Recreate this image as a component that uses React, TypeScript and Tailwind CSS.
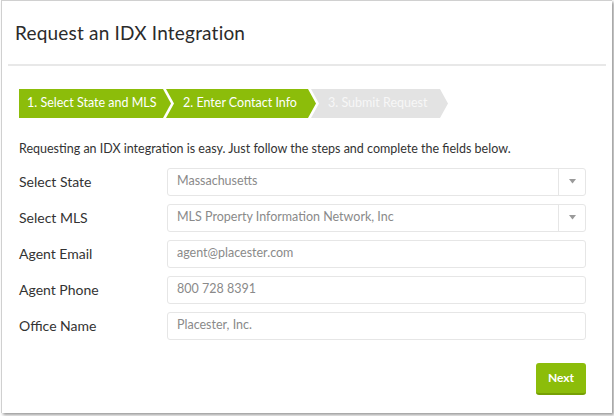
const font = { fontFamily: "'Lato', 'Open Sans', sans-serif" };

function Step({ label, state, first }: { label: string; state: "done" | "todo"; first?: boolean }) {
  const clip = first
    ? "[clip-path:polygon(0_0,calc(100%-8px)_0,100%_50%,calc(100%-8px)_100%,0_100%)]"
    : "[clip-path:polygon(0_0,calc(100%-8px)_0,100%_50%,calc(100%-8px)_100%,0_100%,8px_50%)]";
  const color = state === "done" ? "bg-[#8cbd0a] text-white" : "bg-[#e3e3e3] text-[#f7f7f7]";
  return (
    <div className={`${clip} ${color} h-[29px] flex items-center text-[12.5px] ${first ? "pl-[8px]" : "pl-[17px]"}`}>
      {label}
    </div>
  );
}

function Field({ label, value, select }: { label: string; value: string; select?: boolean }) {
  return (
    <div className="flex items-center h-[28px]">
      <div className="w-[148px] text-[14px] text-[#333]">{label}</div>
      <div className="flex-1 h-[28px] border border-[#e6e6e6] rounded-[3px] flex items-center">
        <div className="flex-1 pl-[9px] text-[12.5px] text-[#8a8a8a]">{value}</div>
        {select && (
          <div className="w-[27px] h-full border-l border-[#e6e6e6] flex items-center justify-center">
            <svg width="7" height="5" viewBox="0 0 7 5">
              <path d="M0 0 L7 0 L3.5 4.5 Z" fill="#9a9a9a" />
            </svg>
          </div>
        )}
      </div>
    </div>
  );
}

export default function App() {
  return (
    <div className="w-[614px] h-[416px] bg-white" style={font}>
      <div className="w-[611px] h-[413px] ml-[1px] bg-white border-l border-t border-[#d0d0d0] shadow-[2px_2px_3px_rgba(0,0,0,0.4)] flex flex-col">
        <div className="h-[63px] flex items-center pl-[13px] text-[19px] tracking-[0.2px] text-[#2b2b2b] pt-[1px]">
          Request an IDX Integration
        </div>
        <div className="mx-[6px] h-[2px] bg-[#e8e8e8]" />
        <div className="flex mt-[23px] ml-[17px]">
          <div className="w-[152px]">
            <Step label="1. Select State and MLS" state="done" first />
          </div>
          <div className="w-[150px] ml-[-5px]">
            <Step label="2. Enter Contact Info" state="done" />
          </div>
          <div className="w-[137px] ml-[-5px]">
            <Step label="3. Submit Request" state="todo" />
          </div>
        </div>
        <div className="mt-[22px] ml-[17px] text-[12.5px] text-[#333]">
          Requesting an IDX integration is easy. Just follow the steps and complete the fields below.
        </div>
        <div className="mt-[9px] ml-[17px] mr-[26px] flex flex-col gap-[8px]">
          <Field label="Select State" value="Massachusetts" select />
          <Field label="Select MLS" value="MLS Property Information Network, Inc" select />
          <Field label="Agent Email" value="agent@placester.com" />
          <Field label="Agent Phone" value="800 728 8391" />
          <Field label="Office Name" value="Placester, Inc." />
        </div>
        <div className="flex justify-end mr-[26px] mt-[23px]">
          <button className="w-[50px] h-[32px] rounded-[3px] bg-[#8cbd0a] border-b-2 border-[#76a005] text-white text-[12px] font-bold">
            Next
          </button>
        </div>
      </div>
    </div>
  );
}
